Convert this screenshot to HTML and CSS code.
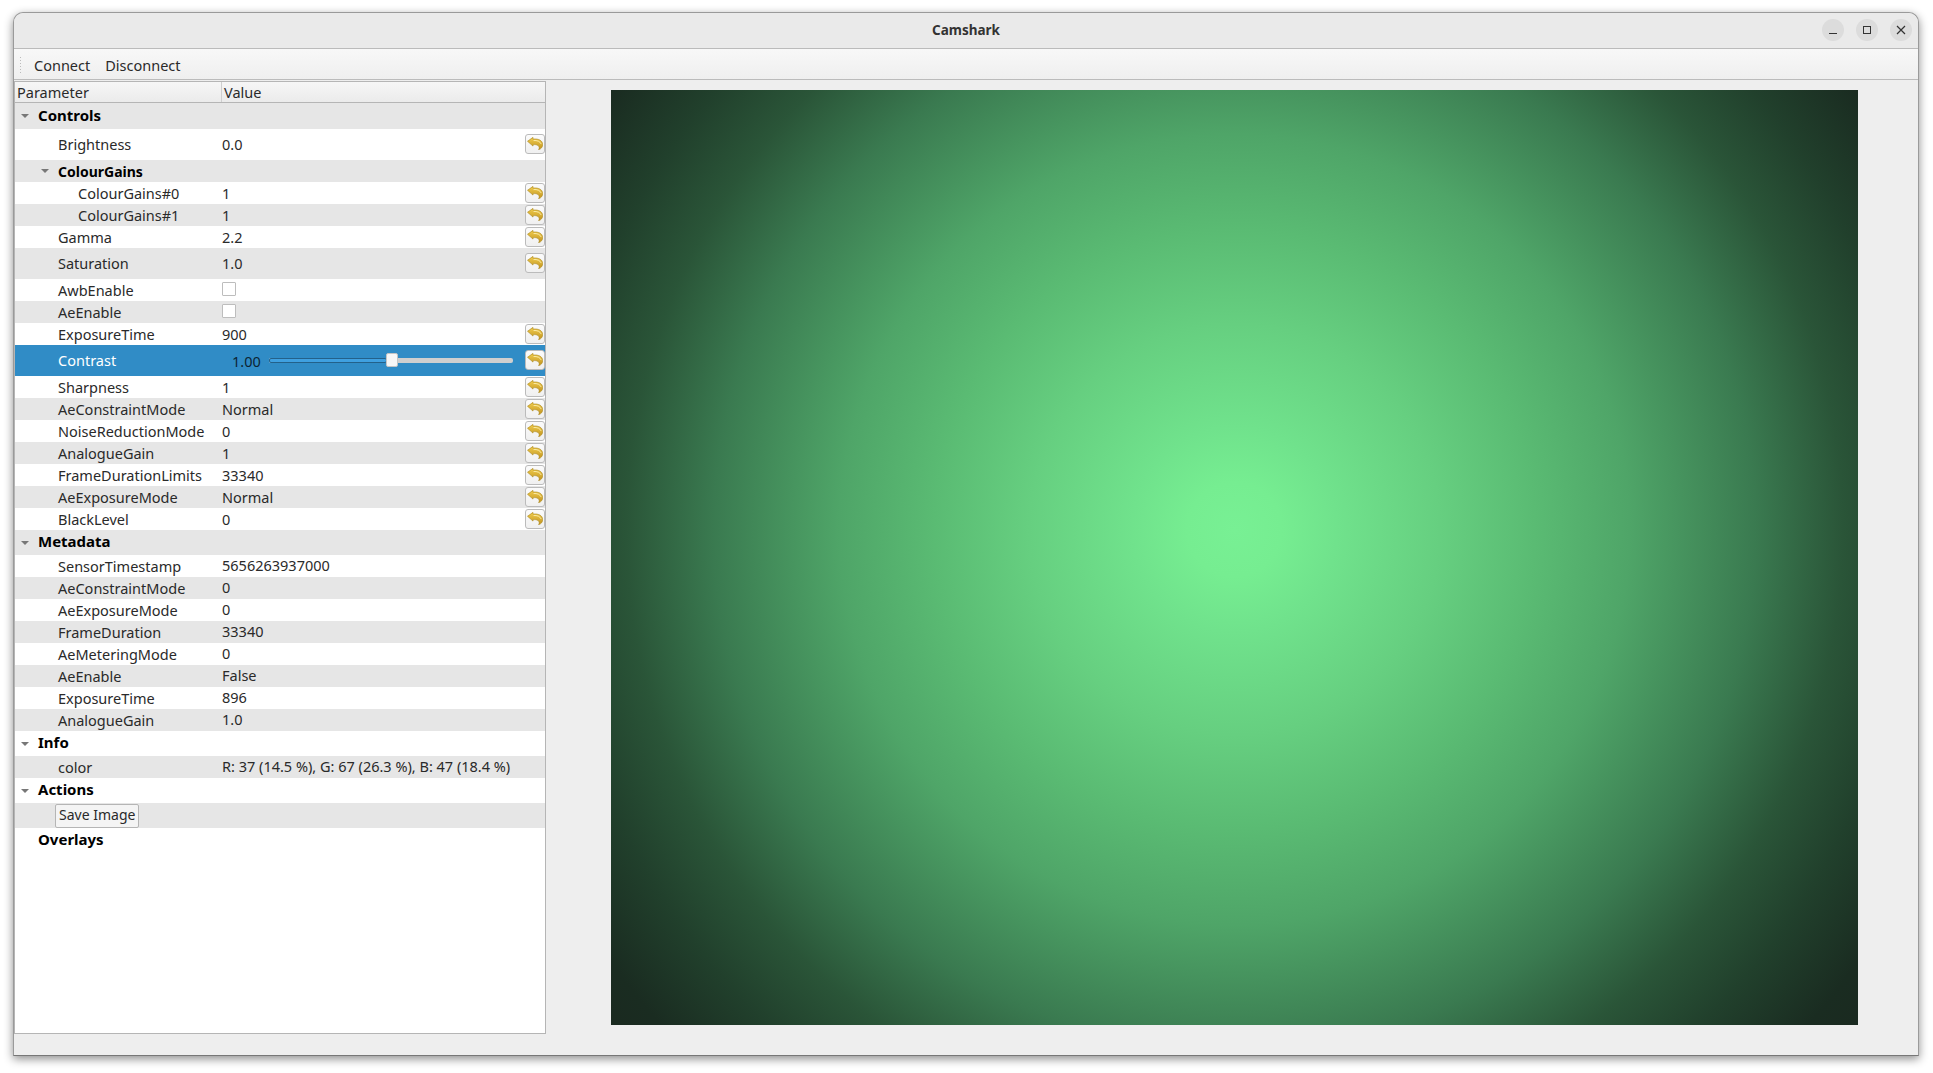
FILE: index.html
```html
<!DOCTYPE html>
<html lang="en">
<head>
    <meta charset="UTF-8">
    <title>Camshark</title>
    <link rel="stylesheet" href="styles.css">
</head>
<body>
    <svg class="defs" width="0" height="0">
        <defs>
            <linearGradient id="gold" x1="0" y1="0" x2="0" y2="1">
                <stop offset="0" stop-color="#F0CC4E"/>
                <stop offset="1" stop-color="#C2941E"/>
            </linearGradient>
        </defs>
        <symbol id="undo" viewBox="0 0 16 14" preserveAspectRatio="none">
            <path d="M0.5 4.6 L6 0.4 V2.2 C11.6 1.6 15.7 3.8 15.7 8.2 C15.7 10.8 14.2 12.8 11.6 13.7 C12.6 11.8 12.4 10.2 11 9.2 C9.6 8.2 8 8 6 8.4 V9.8 Z" fill="url(#gold)" stroke="#A98416" stroke-width=".6" stroke-linejoin="round"/>
            <path d="M6.6 3.8 C10 3.4 13.2 4.8 14.2 7.6" fill="none" stroke="#FBEBA6" stroke-width="1"/>
        </symbol>
    </svg>
    <div class="window">
        <div class="titlebar">
            <span class="title">Camshark</span>
            <div class="win-buttons">
                <div class="win-button"><svg width="12" height="12" viewBox="0 0 12 12"><path d="M2 9.5h8" stroke="#333" stroke-width="1" fill="none"/></svg></div>
                <div class="win-button"><svg width="12" height="12" viewBox="0 0 12 12"><rect x="2.5" y="2.5" width="7" height="7" stroke="#333" stroke-width="1" fill="none"/></svg></div>
                <div class="win-button"><svg width="12" height="12" viewBox="0 0 12 12"><path d="M2 2l8 8M10 2l-8 8" stroke="#333" stroke-width="1.2" fill="none"/></svg></div>
            </div>
        </div>
        <div class="toolbar">
            <div class="grip"></div>
            <span class="tool">Connect</span>
            <span class="tool">Disconnect</span>
        </div>
        <div class="main">
            <div class="tree">
                <div class="tree-header">
                    <div class="head-name">Parameter</div>
                    <div class="head-value">Value</div>
                </div>

                <div class="row group first alt"><span class="arrow"></span><div class="name">Controls</div></div>
                <div class="row tall"><div class="name d1">Brightness</div><div class="value">0.0</div><button class="revert"><svg><use href="#undo"/></svg></button></div>
                <div class="row subgroup alt"><span class="arrow sub"></span><div class="name d1">ColourGains</div></div>
                <div class="row"><div class="name d2">ColourGains#0</div><div class="value">1</div><button class="revert"><svg><use href="#undo"/></svg></button></div>
                <div class="row alt"><div class="name d2">ColourGains#1</div><div class="value">1</div><button class="revert"><svg><use href="#undo"/></svg></button></div>
                <div class="row"><div class="name d1">Gamma</div><div class="value">2.2</div><button class="revert"><svg><use href="#undo"/></svg></button></div>
                <div class="row tall alt"><div class="name d1">Saturation</div><div class="value">1.0</div><button class="revert"><svg><use href="#undo"/></svg></button></div>
                <div class="row"><div class="name d1">AwbEnable</div><div class="value"><span class="check"></span></div></div>
                <div class="row alt"><div class="name d1">AeEnable</div><div class="value"><span class="check"></span></div></div>
                <div class="row"><div class="name d1">ExposureTime</div><div class="value">900</div><button class="revert"><svg><use href="#undo"/></svg></button></div>
                <div class="row tall selected">
                    <div class="name d1">Contrast</div>
                    <div class="value slider-cell">
                        <span class="slider-label">1.00</span>
                        <div class="slider"><div class="slider-fill"></div><div class="slider-handle"></div></div>
                    </div>
                    <button class="revert"><svg><use href="#undo"/></svg></button>
                </div>
                <div class="row"><div class="name d1">Sharpness</div><div class="value">1</div><button class="revert"><svg><use href="#undo"/></svg></button></div>
                <div class="row alt"><div class="name d1">AeConstraintMode</div><div class="value">Normal</div><button class="revert"><svg><use href="#undo"/></svg></button></div>
                <div class="row"><div class="name d1">NoiseReductionMode</div><div class="value">0</div><button class="revert"><svg><use href="#undo"/></svg></button></div>
                <div class="row alt"><div class="name d1">AnalogueGain</div><div class="value">1</div><button class="revert"><svg><use href="#undo"/></svg></button></div>
                <div class="row"><div class="name d1">FrameDurationLimits</div><div class="value">33340</div><button class="revert"><svg><use href="#undo"/></svg></button></div>
                <div class="row alt"><div class="name d1">AeExposureMode</div><div class="value">Normal</div><button class="revert"><svg><use href="#undo"/></svg></button></div>
                <div class="row"><div class="name d1">BlackLevel</div><div class="value">0</div><button class="revert"><svg><use href="#undo"/></svg></button></div>

                <div class="row group alt"><span class="arrow"></span><div class="name">Metadata</div></div>
                <div class="row readonly"><div class="name d1">SensorTimestamp</div><div class="value">5656263937000</div></div>
                <div class="row readonly alt"><div class="name d1">AeConstraintMode</div><div class="value">0</div></div>
                <div class="row readonly"><div class="name d1">AeExposureMode</div><div class="value">0</div></div>
                <div class="row readonly alt"><div class="name d1">FrameDuration</div><div class="value">33340</div></div>
                <div class="row readonly"><div class="name d1">AeMeteringMode</div><div class="value">0</div></div>
                <div class="row readonly alt"><div class="name d1">AeEnable</div><div class="value">False</div></div>
                <div class="row readonly"><div class="name d1">ExposureTime</div><div class="value">896</div></div>
                <div class="row readonly alt"><div class="name d1">AnalogueGain</div><div class="value">1.0</div></div>

                <div class="row group"><span class="arrow"></span><div class="name">Info</div></div>
                <div class="row readonly alt"><div class="name d1">color</div><div class="value">R: 37 (14.5 %), G: 67 (26.3 %), B: 47 (18.4 %)</div></div>

                <div class="row group"><span class="arrow"></span><div class="name">Actions</div></div>
                <div class="row action alt"><button class="save">Save Image</button></div>
                <div class="row group"><div class="name">Overlays</div></div>
            </div>
            <div class="viewer">
                <div class="image"></div>
            </div>
        </div>
    </div>
</body>
</html>
```

FILE: styles.css
```css
* {
    box-sizing: border-box;
}
html, body {
    height: 100%;
}
body {
    margin: 0;
    padding: 12px 14px 17px 13px;
    background-color: #FFFFFF;
    font-family: "Noto Sans", sans-serif;
    font-size: 14.5px;
    color: #2a2a2a;
}
.defs {
    position: absolute;
}
.window {
    height: 100%;
    display: flex;
    flex-direction: column;
    background-color: #EEEEEE;
    border: 1px solid #9a9a9a;
    border-bottom-color: #777777;
    border-radius: 10px 10px 0 0;
    box-shadow: 0 3px 10px rgba(0, 0, 0, 0.45);
}
.titlebar {
    height: 36px;
    flex: none;
    display: flex;
    align-items: center;
    justify-content: center;
    position: relative;
    background-color: #EAEAEA;
    border-bottom: 1px solid #BBBBBB;
    border-radius: 10px 10px 0 0;
}
.title {
    font-weight: bold;
    font-size: 13.5px;
    color: #333333;
    margin-bottom: 2px;
}
.win-buttons {
    position: absolute;
    right: 6px;
    top: 6px;
    display: flex;
    gap: 12px;
}
.win-button {
    width: 22px;
    height: 22px;
    border-radius: 50%;
    background-color: #DCDCDC;
    display: flex;
    align-items: center;
    justify-content: center;
}
.toolbar {
    height: 31px;
    flex: none;
    display: flex;
    align-items: center;
    padding-left: 5px;
    background: linear-gradient(#F8F8F8, #EFEFEF);
    border-bottom: 1px solid #BBBBBB;
}
.grip {
    width: 3px;
    height: 17px;
    margin-right: 12px;
    background-image: radial-gradient(#BBBBBB 0.7px, transparent 0.8px);
    background-size: 3px 3px;
}
.tool {
    margin-right: 15px;
    padding-top: 2px;
}
.main {
    flex: 1;
    min-height: 0;
    display: flex;
    align-items: flex-start;
}
.tree {
    width: 532px;
    height: 953px;
    margin-top: 1px;
    flex: none;
    background-color: #FFFFFF;
    border: 1px solid #B5B5B5;
}
.tree-header {
    display: flex;
    height: 21px;
    background: linear-gradient(#F6F6F6, #EBEBEB);
    border-bottom: 1px solid #B5B5B5;
    line-height: 20px;
}
.head-name {
    width: 207px;
    padding-left: 2px;
    border-right: 1px solid #CFCFCF;
}
.head-value {
    padding-left: 2px;
}
.row {
    height: 22px;
    display: flex;
    align-items: center;
    position: relative;
}
.row.tall {
    height: 31px;
}
.row.tall .name, .row.tall .value {
    padding-bottom: 2px;
}
.row.alt {
    background-color: #E6E6E6;
}
.row.group {
    height: 25px;
    font-weight: bold;
    font-size: 15px;
    color: #000000;
}
.row.group.first {
    height: 26px;
}
.row.group .name {
    padding-left: 23px;
    padding-bottom: 3px;
}
.row.group.first .name {
    padding-bottom: 2px;
}
.row.subgroup {
    font-weight: bold;
    font-size: 14px;
    color: #000000;
}
.row.action {
    height: 25px;
}
.row.selected {
    background-color: #308CC6;
    color: #FFFFFF;
}
.name {
    width: 207px;
    flex: none;
    white-space: nowrap;
}
.name.d1 {
    padding-left: 43px;
}
.name.d2 {
    padding-left: 63px;
}
.value {
    flex: 1;
    white-space: nowrap;
}
.readonly .value {
    padding-bottom: 2px;
}
.arrow {
    position: absolute;
    left: 6px;
    top: 50%;
    margin-top: -2px;
    border-left: 4px solid transparent;
    border-right: 4px solid transparent;
    border-top: 4px solid #777777;
}
.arrow.sub {
    left: 26px;
}
.check {
    display: block;
    width: 14px;
    height: 14px;
    margin-bottom: 2px;
    background-color: #FFFFFF;
    border: 1px solid #BDBDBD;
    border-radius: 1px;
}
.revert {
    position: absolute;
    right: 0;
    top: 5px;
    width: 20px;
    height: 20px;
    padding: 0 1px;
    background: linear-gradient(#FBFBFB, #F0F0F0);
    border: 1px solid #BBBBBB;
    border-radius: 3px;
}
.row:not(.tall) .revert {
    top: 1px;
}
.revert svg {
    display: block;
    width: 16px;
    height: 13px;
    margin-bottom: 2px;
}
.row.tall .slider-cell {
    display: flex;
    align-items: center;
    height: 100%;
    padding-bottom: 0;
    overflow: hidden;
}
.slider-label {
    margin-left: 10px;
    margin-bottom: 3px;
    width: 37px;
    height: 21px;
    line-height: 25px;
    color: #0C2433;
    flex: none;
}
.slider {
    position: relative;
    width: 244px;
    height: 5px;
    background-color: #CFCFCF;
    border-radius: 2px;
}
.slider-fill {
    width: 118px;
    height: 100%;
    background-color: #3FA0E0;
    border: 1px solid #23618A;
    border-radius: 2px;
}
.slider-handle {
    position: absolute;
    left: 117px;
    top: -5px;
    width: 12px;
    height: 14px;
    background-color: #F7F7F7;
    border: 1px solid #C4C4C4;
    border-radius: 2px;
}
.save {
    margin-left: 40px;
    height: 24px;
    padding: 0 3px 2px;
    font-family: inherit;
    font-size: 14px;
    color: inherit;
    background-color: #F4F4F4;
    border: 1px solid #B5B5B5;
    border-radius: 2px;
}
.viewer {
    flex: 1;
    padding: 10px 60px 0 65px;
}
.image {
    width: 1247px;
    height: 935px;
    background: radial-gradient(circle 790px at 50% 47%, #78F094 0%, #76ED91 6%, #70E28C 13%, #66CF80 26%, #5ABB73 38%, #4FA568 50%, #47955F 56%, #3A7A50 66%, #2A5538 77%, #21402C 86%, #1A2C21 96%, #1A2A20 100%);
}
```
